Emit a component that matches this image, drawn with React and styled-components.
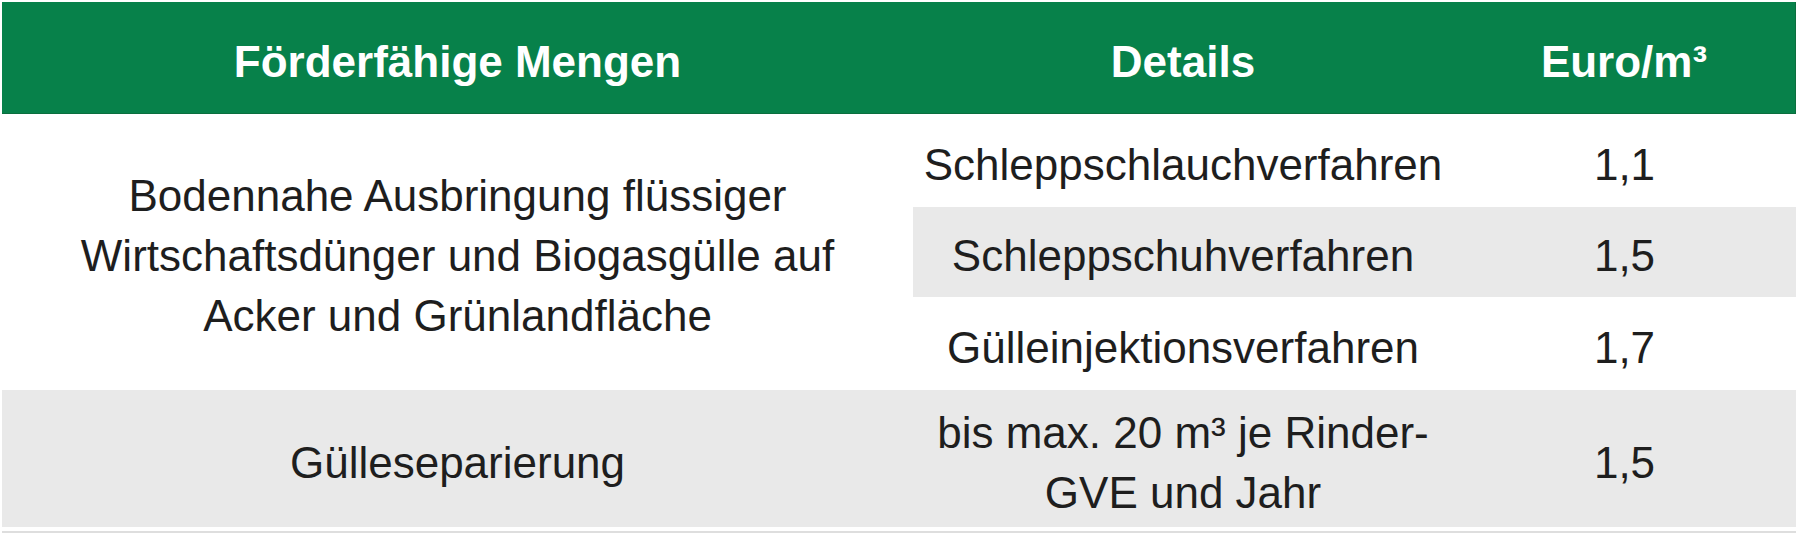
import styled, { createGlobalStyle } from "styled-components"

const Global = createGlobalStyle`
    body {
        margin: 0;
        background: #ffffff;
        font-family: "Liberation Sans", Arial, sans-serif;
    }
`

const rows = [
    { detail: "Schleppschlauchverfahren", euro: "1,1", shade: false },
    { detail: "Schleppschuhverfahren", euro: "1,5", shade: true },
    { detail: "Gülleinjektionsverfahren", euro: "1,7", shade: false },
]

export default function App() {
    return (
        <>
            <Global />
            <Page>
                <Table>
                    <Head>Förderfähige Mengen</Head>
                    <Head>Details</Head>
                    <Head $edge>Euro/m³</Head>

                    <Cell $span={3} $wide>
                        Bodennahe Ausbringung flüssiger Wirtschaftsdünger und Biogasgülle auf Acker und Grünlandfläche
                    </Cell>
                    {rows.map((r) => (
                        <Pair key={r.detail}>
                            <Cell $shade={r.shade}>{r.detail}</Cell>
                            <Cell $shade={r.shade}>{r.euro}</Cell>
                        </Pair>
                    ))}

                    <Cell $shade $wide>Gülleseparierung</Cell>
                    <Cell $shade>bis max. 20 m³ je Rinder-GVE und Jahr</Cell>
                    <Cell $shade>1,5</Cell>
                </Table>
                <Rule />
            </Page>
        </>
    )
}

const Page = styled.div`
    padding: 2px 4px 0 2px;
`
const Table = styled.div`
    display: grid;
    grid-template-columns: 911px 540px 343px;
    grid-template-rows: 112px 93px 90px 93px 137px;
`
const Head = styled.div`
    background-color: #07814a;
    border-bottom: 1px solid #0b6e3e;
    border-right: ${(p) => (p.$edge ? "1px solid #0b6e3e" : "none")};
    color: #ffffff;
    font-weight: 700;
    font-size: 44px;
    display: flex;
    align-items: center;
    justify-content: center;
    padding-top: 9px;
    box-sizing: border-box;
`
const Pair = styled.div`
    display: contents;
`
const Cell = styled.div`
    grid-row: ${(p) => (p.$span ? `span ${p.$span}` : "auto")};
    background-color: ${(p) => (p.$shade ? "#e9e9e9" : "#ffffff")};
    color: #1e1e1e;
    font-size: 44px;
    line-height: 60px;
    text-align: center;
    display: flex;
    align-items: center;
    justify-content: center;
    padding: 8px ${(p) => (p.$wide ? "48px" : "10px")} 0;
    box-sizing: border-box;
`
const Rule = styled.div`
    margin-top: 4px;
    height: 2px;
    background-color: #dedede;
`
